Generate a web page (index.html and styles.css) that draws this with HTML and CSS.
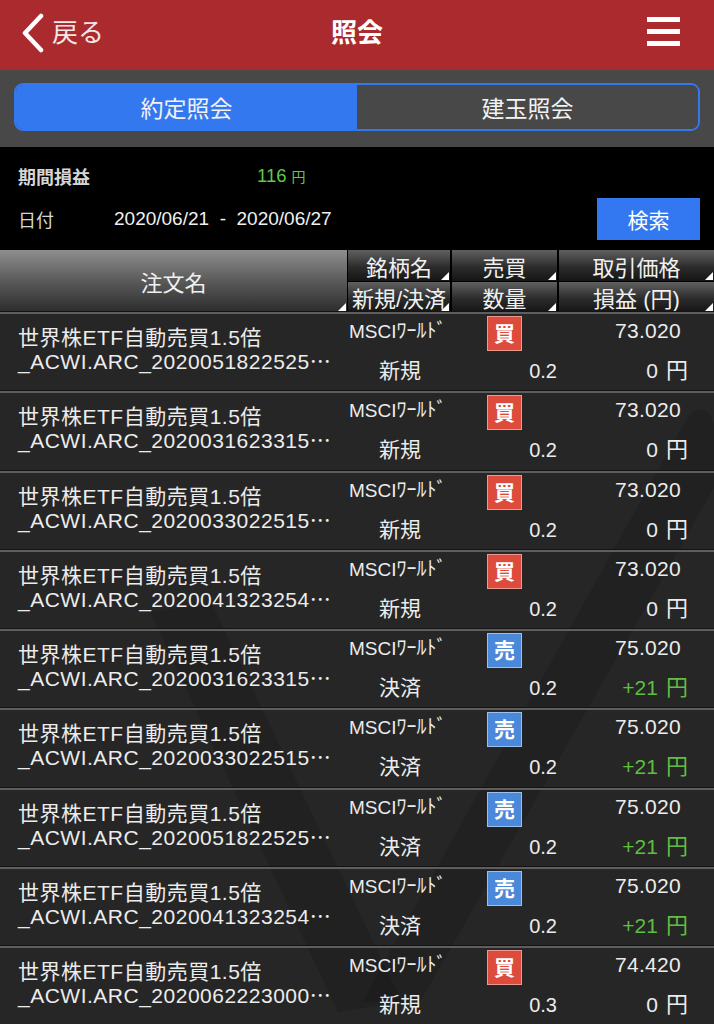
FILE: index.html
```html
<!DOCTYPE html>
<html lang="ja">
<head>
<meta charset="utf-8">
<title>照会</title>
<link rel="stylesheet" href="styles.css">
</head>
<body>
<header class="nav">
  <div class="back">
    <svg viewBox="0 0 24 40" aria-hidden="true"><path d="M20 3 L4 20 L20 37" fill="none" stroke="#fff" stroke-width="4.5" stroke-linecap="round" stroke-linejoin="round"/></svg>
    <span>戻る</span>
  </div>
  <h1 class="title">照会</h1>
  <div class="menu"><span></span><span></span><span></span></div>
</header>

<div class="segbar">
  <div class="seg">
    <div class="seg-item active">約定照会</div>
    <div class="seg-item other">建玉照会</div>
  </div>
</div>

<section class="summary">
  <div class="sum-row first">
    <span class="lbl-pl">期間損益</span>
    <span class="pl">116<small>円</small></span>
  </div>
  <div class="sum-row second">
    <span class="lbl-date">日付</span>
    <span class="dates">2020/06/21  -  2020/06/27</span>
    <button class="search">検索</button>
  </div>
</section>

<div class="thead">
  <div class="th-name">注文名</div>
  <div class="th-grid">
    <div class="th">銘柄名</div>
    <div class="th">売買</div>
    <div class="th">取引価格</div>
    <div class="th">新規/決済</div>
    <div class="th">数量</div>
    <div class="th">損益 (円)</div>
  </div>
</div>

<div class="list">
  <svg class="wm" viewBox="0 0 714 712" aria-hidden="true">
    <path d="M150 300 L212 292 L402 690 L338 700 Z" fill="#000" opacity="0.12"/>
    <path d="M688 104 Q706 88 714 112 L714 176 L420 690 L362 690 Z" fill="#000" opacity="0.12"/>
  </svg>

  <div class="row">
    <div class="name"><span>世界株ETF自動売買1.5倍</span><span>_ACWI.ARC_2020051822525<i class="ell">…</i></span></div>
    <div class="brand">MSCI<span class="kana">ﾜｰﾙﾄﾞ</span></div>
    <div class="badge-cell"><span class="badge buy">買</span></div>
    <div class="price">73.020</div>
    <div class="kind">新規</div>
    <div class="qty">0.2</div>
    <div class="pnl">0<span class="yen">円</span></div>
  </div>
  <div class="row">
    <div class="name"><span>世界株ETF自動売買1.5倍</span><span>_ACWI.ARC_2020031623315<i class="ell">…</i></span></div>
    <div class="brand">MSCI<span class="kana">ﾜｰﾙﾄﾞ</span></div>
    <div class="badge-cell"><span class="badge buy">買</span></div>
    <div class="price">73.020</div>
    <div class="kind">新規</div>
    <div class="qty">0.2</div>
    <div class="pnl">0<span class="yen">円</span></div>
  </div>
  <div class="row">
    <div class="name"><span>世界株ETF自動売買1.5倍</span><span>_ACWI.ARC_2020033022515<i class="ell">…</i></span></div>
    <div class="brand">MSCI<span class="kana">ﾜｰﾙﾄﾞ</span></div>
    <div class="badge-cell"><span class="badge buy">買</span></div>
    <div class="price">73.020</div>
    <div class="kind">新規</div>
    <div class="qty">0.2</div>
    <div class="pnl">0<span class="yen">円</span></div>
  </div>
  <div class="row">
    <div class="name"><span>世界株ETF自動売買1.5倍</span><span>_ACWI.ARC_2020041323254<i class="ell">…</i></span></div>
    <div class="brand">MSCI<span class="kana">ﾜｰﾙﾄﾞ</span></div>
    <div class="badge-cell"><span class="badge buy">買</span></div>
    <div class="price">73.020</div>
    <div class="kind">新規</div>
    <div class="qty">0.2</div>
    <div class="pnl">0<span class="yen">円</span></div>
  </div>
  <div class="row">
    <div class="name"><span>世界株ETF自動売買1.5倍</span><span>_ACWI.ARC_2020031623315<i class="ell">…</i></span></div>
    <div class="brand">MSCI<span class="kana">ﾜｰﾙﾄﾞ</span></div>
    <div class="badge-cell"><span class="badge sell">売</span></div>
    <div class="price">75.020</div>
    <div class="kind">決済</div>
    <div class="qty">0.2</div>
    <div class="pnl gain">+21<span class="yen">円</span></div>
  </div>
  <div class="row">
    <div class="name"><span>世界株ETF自動売買1.5倍</span><span>_ACWI.ARC_2020033022515<i class="ell">…</i></span></div>
    <div class="brand">MSCI<span class="kana">ﾜｰﾙﾄﾞ</span></div>
    <div class="badge-cell"><span class="badge sell">売</span></div>
    <div class="price">75.020</div>
    <div class="kind">決済</div>
    <div class="qty">0.2</div>
    <div class="pnl gain">+21<span class="yen">円</span></div>
  </div>
  <div class="row">
    <div class="name"><span>世界株ETF自動売買1.5倍</span><span>_ACWI.ARC_2020051822525<i class="ell">…</i></span></div>
    <div class="brand">MSCI<span class="kana">ﾜｰﾙﾄﾞ</span></div>
    <div class="badge-cell"><span class="badge sell">売</span></div>
    <div class="price">75.020</div>
    <div class="kind">決済</div>
    <div class="qty">0.2</div>
    <div class="pnl gain">+21<span class="yen">円</span></div>
  </div>
  <div class="row">
    <div class="name"><span>世界株ETF自動売買1.5倍</span><span>_ACWI.ARC_2020041323254<i class="ell">…</i></span></div>
    <div class="brand">MSCI<span class="kana">ﾜｰﾙﾄﾞ</span></div>
    <div class="badge-cell"><span class="badge sell">売</span></div>
    <div class="price">75.020</div>
    <div class="kind">決済</div>
    <div class="qty">0.2</div>
    <div class="pnl gain">+21<span class="yen">円</span></div>
  </div>
  <div class="row">
    <div class="name"><span>世界株ETF自動売買1.5倍</span><span>_ACWI.ARC_2020062223000<i class="ell">…</i></span></div>
    <div class="brand">MSCI<span class="kana">ﾜｰﾙﾄﾞ</span></div>
    <div class="badge-cell"><span class="badge buy">買</span></div>
    <div class="price">74.420</div>
    <div class="kind">新規</div>
    <div class="qty">0.3</div>
    <div class="pnl">0<span class="yen">円</span></div>
  </div>
</div>
</body>
</html>
```
FILE: styles.css
```css
* { box-sizing: border-box; margin: 0; padding: 0; }
html, body { background: #000; }
body {
  width: 714px;
  height: 1024px;
  overflow: hidden;
  font-family: "Liberation Sans", "Noto Sans CJK JP", sans-serif;
  color: #ececec;
}

/* nav bar */
.nav {
  height: 70px;
  background: #aa2a2d;
  display: grid;
  grid-template-columns: 1fr auto 1fr;
  align-items: center;
}
.back {
  display: flex;
  align-items: center;
  gap: 7px;
  padding-left: 21px;
  margin-bottom: 5px;
  color: #f4e6e6;
  font-size: 26px;
  line-height: 32px;
}
.back svg { width: 24px; height: 40px; display: block; }
.title {
  font-size: 26px;
  font-weight: bold;
  color: #fff;
  line-height: 36px;
  margin-bottom: 4px;
}
.menu {
  justify-self: end;
  align-self: start;
  margin-top: 17px;
  margin-right: 34px;
  display: flex;
  flex-direction: column;
  gap: 7px;
}
.menu span { display: block; width: 33px; height: 5px; background: #fff; }

/* segmented control */
.segbar {
  height: 77px;
  background: #484848;
  padding: 13px 14px 0;
}
.seg {
  height: 48px;
  border: 2px solid #3478f0;
  border-radius: 9px;
  overflow: hidden;
  display: flex;
}
.seg-item {
  display: flex;
  align-items: center;
  justify-content: center;
  font-size: 23px;
  color: #f2f2f2;
}
.seg-item.active { width: 341px; background: #3478f0; }
.seg-item.other { flex: 1; background: #484848; }

/* summary */
.summary {
  height: 103px;
  padding: 14px 14px 0 18px;
  display: flex;
  flex-direction: column;
  gap: 7px;
}
.sum-row { display: flex; align-items: center; }
.sum-row.first { height: 30px; }
.sum-row.second { height: 42px; }
.lbl-pl { width: 239px; font-size: 18px; font-weight: bold; color: #d6d6d6; }
.pl { color: #5ec94c; font-size: 18.5px; }
.pl small { font-size: 14px; margin-left: 5px; }
.lbl-date { width: 96px; font-size: 18px; color: #d6d6d6; }
.dates { flex: 1; font-size: 19px; white-space: pre; color: #f0f0f0; }
.search {
  width: 103px;
  height: 42px;
  background: #3378f0;
  border: none;
  color: #fff;
  font-family: inherit;
  font-size: 21px;
}

/* table header */
.thead {
  display: flex;
  gap: 1px;
  height: 62px;
  background: #000;
}
.th-name {
  position: relative;
  width: 347px;
  background: linear-gradient(#8e8e8e, #5a5a5a 50%, #2c2c2c);
  display: flex;
  align-items: center;
  justify-content: center;
  font-size: 22px;
  color: #f0f0f0;
}
.th-grid {
  flex: 1;
  display: grid;
  grid-template-columns: 102px 105px 155px;
  grid-template-rows: 31px 30px;
  column-gap: 2px;
  row-gap: 1px;
}
.th {
  position: relative;
  background: linear-gradient(#606060, #2c2c2c 55%, #151515);
  display: flex;
  align-items: center;
  justify-content: center;
  font-size: 22px;
  color: #f0f0f0;
  white-space: nowrap;
}
.th::after, .th-name::after {
  content: "";
  position: absolute;
  right: 1px;
  bottom: 1px;
  border-left: 8px solid transparent;
  border-bottom: 8px solid #fff;
}

/* list */
.list {
  position: relative;
  background: #262626;
}
.wm {
  position: absolute;
  left: 0;
  top: 0;
  width: 714px;
  height: 712px;
}
.row {
  position: relative;
  height: 79.25px;
  border-top: 2px solid #5e5e5e;
  box-shadow: 0 -1px 0 #141414;
  display: grid;
  grid-template-columns: 348px 104px 105px 157px;
  grid-template-rows: 38px 1fr;
}
.name {
  grid-column: 1;
  grid-row: 1 / 3;
  padding: 12px 0 0 18px;
  font-size: 21px;
  line-height: 23px;
  letter-spacing: 0.5px;
  color: #ececec;
}
.name span { display: block; white-space: nowrap; }
.name .ell {
  font-style: normal;
  font-family: "Noto Sans CJK JP", sans-serif;
  letter-spacing: 0;
}
.brand {
  grid-column: 2;
  grid-row: 1;
  padding-left: 1px;
  font-size: 19px;
  line-height: 34px;
  white-space: nowrap;
}
.brand .kana { font-size: 20px; }
.badge-cell {
  grid-column: 3;
  grid-row: 1;
  display: flex;
  justify-content: center;
  padding-top: 2px;
}
.badge {
  width: 35px;
  height: 35px;
  font-size: 21px;
  line-height: 33px;
  text-align: center;
  font-weight: bold;
  color: #fff;
  border: 1px solid;
}
.badge.buy { background: #dc4b3b; border-color: #ec9a90; }
.badge.sell { background: #4a88da; border-color: #9cbfee; }
.price {
  grid-column: 4;
  grid-row: 1;
  text-align: right;
  padding-right: 33px;
  font-size: 21px;
  line-height: 34px;
  letter-spacing: 0.3px;
}
.kind {
  grid-column: 2;
  grid-row: 2;
  text-align: center;
  font-size: 21px;
  line-height: 38px;
}
.qty {
  grid-column: 3;
  grid-row: 2;
  text-align: right;
  font-size: 20px;
  line-height: 38px;
}
.pnl {
  grid-column: 4;
  grid-row: 2;
  text-align: right;
  padding-right: 26px;
  font-size: 21px;
  line-height: 38px;
}
.pnl .yen { font-size: 22px; margin-left: 8px; }
.pnl.gain { color: #5fbf3e; }
```
